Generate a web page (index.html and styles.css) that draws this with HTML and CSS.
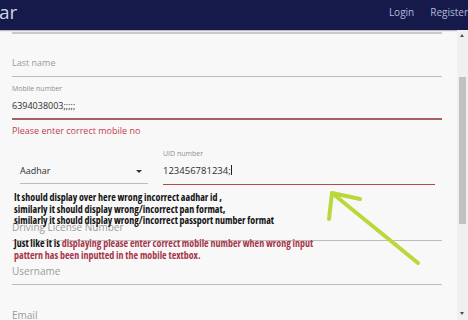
FILE: index.html
```html
<!DOCTYPE html>
<html>
<head>
<meta charset="utf-8">
<link rel="stylesheet" href="styles.css">
</head>
<body>
<header class="topbar">
  <span class="brand">ar</span>
  <nav class="nav">
    <a class="nav-link">Login</a>
    <a class="nav-link">Register</a>
  </nav>
</header>
<div class="viewport">
  <main class="content">
    <div class="card-top"></div>
    <div class="field field-last">
      <div class="placeholder">Last name</div>
    </div>
    <div class="field field-mobile is-error">
      <div class="label">Mobile number</div>
      <div class="value">6394038003;;;;;</div>
    </div>
    <div class="error">Please enter correct mobile no</div>
    <div class="id-row">
      <div class="select">
        <span class="value">Aadhar</span>
        <span class="caret"></span>
      </div>
      <div class="field field-uid is-error">
        <div class="label">UID number</div>
        <div class="value">123456781234;<span class="cursor"></span></div>
      </div>
    </div>
    <div class="field field-dl">
      <div class="placeholder">Driving License Number</div>
    </div>
    <div class="field field-user">
      <div class="placeholder">Username</div>
    </div>
    <div class="field field-email">
      <div class="placeholder">Email</div>
    </div>

    <div class="note note-top">It should display over here wrong incorrect aadhar id ,<br>similarly it should display wrong/incorrect pan format,<br>similarly it should display wrong/incorrect passport number format</div>
    <div class="note note-bottom">Just like it is <span class="note-red">displaying please enter correct mobile number when wrong input<br>pattern has been inputted in the mobile textbox.</span></div>
    <svg class="arrow" width="120" height="90" viewBox="0 0 120 90">
      <g fill="none" stroke="#b9d93a" stroke-width="4" stroke-linecap="round" stroke-linejoin="round">
        <path d="M103 85 L17 15"/>
        <path d="M45 21 L17 15 L14 41"/>
      </g>
    </svg>
  </main>
  <div class="scrollbar">
    <span class="sb-up"></span>
    <span class="sb-thumb"></span>
    <span class="sb-down"></span>
  </div>
</div>
</body>
</html>
```
FILE: styles.css
```css
* { box-sizing: border-box; }
html, body { margin: 0; padding: 0; }
body {
  width: 468px;
  height: 320px;
  overflow: hidden;
  background: #f8f8f8;
  font-family: "Open Sans", "Noto Sans", sans-serif;
  display: flex;
  flex-direction: column;
}
.topbar {
  height: 30px;
  flex: none;
  background: #151a4b;
  display: flex;
  align-items: center;
  justify-content: space-between;
  box-shadow: 0 1px 1px rgba(0,0,0,0.25);
}
.brand {
  color: #d0d3e8;
  font-size: 19px;
  line-height: 24px;
  margin-left: -1px;
  margin-top: -6px;
}
.nav {
  display: flex;
  gap: 16px;
  margin-top: -7px;
}
.nav-link {
  color: #b4b8dc;
  font-size: 10px;
}
.viewport {
  flex: 1;
  display: flex;
  min-height: 0;
}
.content {
  position: relative;
  flex: 1;
  padding: 0 15px 0 12px;
  overflow: hidden;
}
.card-top {
  margin-top: 2px;
  height: 2px;
  background: #c9c9c9;
}
.field {
  border-bottom: 1px solid #bcbcbc;
  padding-bottom: 6px;
}
.placeholder, .value {
  font-size: 9px;
  line-height: 14px;
  white-space: nowrap;
}
.placeholder { color: #9a9a9a; }
.value { color: #2c2c2c; }
.field-dl .placeholder, .field-user .placeholder, .field-email .placeholder { font-size: 10px; }
.label {
  font-size: 7px;
  line-height: 10px;
  color: #8e8e8e;
}
.field-last { margin-top: 22px; }
.field-mobile { margin-top: 7px; }
.field-mobile .value { margin-top: 5px; }
.is-error { border-bottom: 2px solid #a86060; padding-bottom: 5px; }
.error {
  margin-top: 4px;
  font-size: 9px;
  line-height: 14px;
  color: #c0404a;
}
.id-row {
  display: flex;
  align-items: flex-end;
  margin-top: 11px;
  padding-left: 8px;
  padding-right: 7px;
}
.select {
  width: 128px;
  display: flex;
  justify-content: space-between;
  align-items: center;
  border-bottom: 1px solid #bcbcbc;
  padding-bottom: 5px;
  margin-bottom: 1px;
}
.caret {
  width: 0; height: 0;
  border-left: 3px solid transparent;
  border-right: 3px solid transparent;
  border-top: 3px solid #333;
  margin-right: 6px;
}
.field-uid {
  flex: 1;
  margin-left: 15px;
  border-bottom: 1px solid #b24a4a;
  padding-bottom: 6px;
}
.field-uid .value { margin-top: 5px; font-size: 9.5px; }
.cursor {
  display: inline-block;
  width: 1px;
  height: 10px;
  background: #222;
  vertical-align: -1px;
}
.field-dl { margin-top: 35px; }
.field-user { margin-top: 23px; }
.field-email { margin-top: 23px; border-bottom: none; }

.note {
  position: absolute;
  left: 14px;
  font-family: "Liberation Sans Narrow", "Open Sans", sans-serif;
  font-stretch: condensed;
  font-weight: bold;
  font-size: 10px;
  line-height: 11.5px;
  color: #111;
  white-space: nowrap;
}
.note-top { top: 162px; }
.note-bottom { top: 207px; line-height: 12px; }
.note-red { color: #a8364a; }
.arrow {
  position: absolute;
  left: 315px;
  top: 148px;
}
.scrollbar {
  width: 11px;
  flex: none;
  background: #f0f0f0;
  position: relative;
}
.sb-up {
  position: absolute; top: 4px; left: 3px;
  border-left: 2.5px solid transparent;
  border-right: 2.5px solid transparent;
  border-bottom: 3px solid #505050;
}
.sb-down {
  position: absolute; bottom: 5px; left: 3px;
  border-left: 2.5px solid transparent;
  border-right: 2.5px solid transparent;
  border-top: 3px solid #505050;
}
.sb-thumb {
  position: absolute; top: 47px; left: 2px;
  width: 7px; height: 147px;
  background: #c1c1c1;
}
```
